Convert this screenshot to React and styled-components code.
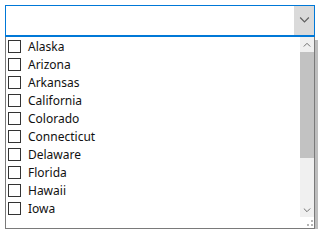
import React from "react";
import styled, { createGlobalStyle } from "styled-components";

const states = [
  "Alaska",
  "Arizona",
  "Arkansas",
  "California",
  "Colorado",
  "Connecticut",
  "Delaware",
  "Florida",
  "Hawaii",
  "Iowa",
];

const GlobalStyle = createGlobalStyle`
  body {
    margin: 0;
    background: #fff;
    font-family: "Segoe UI", "Noto Sans", sans-serif;
  }
`;

const Page = styled.div`
  padding: 5px 0 0 5px;
`;

const Combo = styled.div`
  width: 310px;
  height: 32px;
  box-sizing: border-box;
  border: 1px solid #0078d7;
  border-bottom-width: 2px;
  display: flex;
  justify-content: flex-end;
  background: #fff;
`;

const DropButton = styled.div`
  width: 20px;
  background: #dadada;
  display: flex;
  align-items: center;
  justify-content: center;
`;

const ListBox = styled.div`
  width: 310px;
  height: 192px;
  box-sizing: border-box;
  border: 1px solid #7a7a7a;
  border-top: none;
  box-shadow: 3px 3px 0 #bdbdbd;
  display: flex;
  background: #fff;
`;

const Items = styled.div`
  flex: 1;
`;

const Row = styled.div`
  height: 18px;
  display: flex;
  align-items: center;
  padding-left: 2px;
  font-size: 12px;
  color: #111;
`;

const Box = styled.span`
  width: 13px;
  height: 13px;
  box-sizing: border-box;
  border: 1px solid #333;
  margin-right: 7px;
  background: #fff;
`;

const ScrollBar = styled.div`
  width: 14px;
  display: flex;
  flex-direction: column;
  background: #f0f0f0;
`;

const ArrowButton = styled.div`
  height: ${(p) => p.h}px;
  display: flex;
  align-items: center;
  justify-content: center;
`;

const Thumb = styled.div`
  height: 106px;
  background: #c2c2c2;
`;

const Track = styled.div`
  flex: 1;
`;

const Grip = styled.div`
  height: 11px;
  background: #fff;
  display: flex;
  align-items: center;
  justify-content: flex-end;
`;

const Chevron = ({ up, size = 9 }) => (
  <svg width={size} height={size / 2 + 1} viewBox="0 0 10 6">
    <path
      d={up ? "M1 5.5 L5 1.5 L9 5.5" : "M1 0.5 L5 4.5 L9 0.5"}
      fill="none"
      stroke="#606060"
      strokeWidth="1.1"
    />
  </svg>
);

const App = () => (
  <>
    <GlobalStyle />
    <Page>
      <Combo>
        <DropButton>
          <Chevron size={11} />
        </DropButton>
      </Combo>
      <ListBox>
        <Items>
          {states.map((s) => (
            <Row key={s}>
              <Box />
              {s}
            </Row>
          ))}
        </Items>
        <ScrollBar>
          <ArrowButton h={15}>
            <Chevron up size={8} />
          </ArrowButton>
          <Thumb />
          <Track />
          <ArrowButton h={13}>
            <Chevron size={8} />
          </ArrowButton>
          <Grip>
            <svg width="8" height="8" viewBox="0 0 8 8">
              <rect x="5" y="1" width="2" height="2" fill="#b5b5b5" />
              <rect x="1" y="5" width="2" height="2" fill="#b5b5b5" />
              <rect x="5" y="5" width="2" height="2" fill="#b5b5b5" />
            </svg>
          </Grip>
        </ScrollBar>
      </ListBox>
    </Page>
  </>
);

export default App;
